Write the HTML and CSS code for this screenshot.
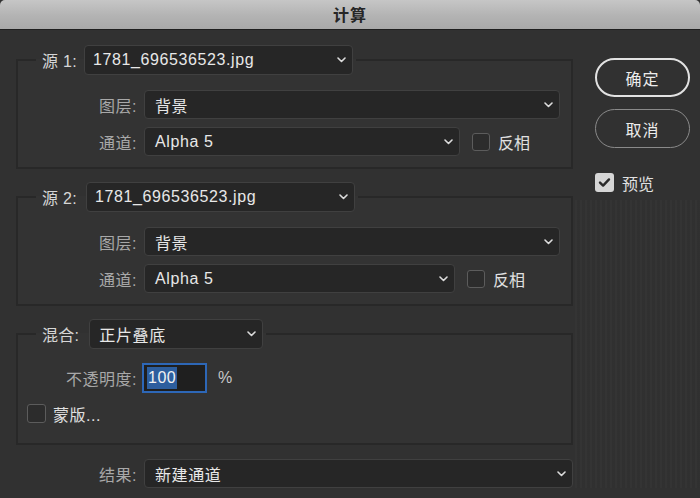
FILE: index.html
```html
<!DOCTYPE html>
<html lang="zh-CN">
<head>
<meta charset="utf-8">
<title>计算</title>
<link rel="stylesheet" href="styles.css">
</head>
<body>
<div class="titlebar">计算</div>
<div class="dialog">
  <div class="main">
    <fieldset class="group">
      <legend class="legend">
        <span class="legend-label">源 1:</span>
        <div class="select select-src">
          <span class="value">1781_696536523.jpg</span>
          <svg class="chev" width="9" height="6" viewBox="0 0 9 6"><path d="M1 1 L4.5 4.5 L8 1"/></svg>
        </div>
      </legend>
      <div class="row">
        <span class="label">图层:</span>
        <div class="select select-row grow">
          <span class="value">背景</span>
          <svg class="chev" width="9" height="6" viewBox="0 0 9 6"><path d="M1 1 L4.5 4.5 L8 1"/></svg>
        </div>
      </div>
      <div class="row gap-row">
        <span class="label">通道:</span>
        <div class="select select-row select-ch1">
          <span class="value">Alpha 5</span>
          <svg class="chev" width="9" height="6" viewBox="0 0 9 6"><path d="M1 1 L4.5 4.5 L8 1"/></svg>
        </div>
        <span class="checkbox"></span>
        <span class="check-text">反相</span>
      </div>
    </fieldset>

    <fieldset class="group">
      <legend class="legend">
        <span class="legend-label label-2">源 2:</span>
        <div class="select select-src">
          <span class="value">1781_696536523.jpg</span>
          <svg class="chev" width="9" height="6" viewBox="0 0 9 6"><path d="M1 1 L4.5 4.5 L8 1"/></svg>
        </div>
      </legend>
      <div class="row">
        <span class="label">图层:</span>
        <div class="select select-row grow">
          <span class="value">背景</span>
          <svg class="chev" width="9" height="6" viewBox="0 0 9 6"><path d="M1 1 L4.5 4.5 L8 1"/></svg>
        </div>
      </div>
      <div class="row gap-row">
        <span class="label">通道:</span>
        <div class="select select-row select-ch2">
          <span class="value">Alpha 5</span>
          <svg class="chev" width="9" height="6" viewBox="0 0 9 6"><path d="M1 1 L4.5 4.5 L8 1"/></svg>
        </div>
        <span class="checkbox"></span>
        <span class="check-text">反相</span>
      </div>
    </fieldset>

    <fieldset class="group group-blend">
      <legend class="legend">
        <span class="legend-label label-3">混合:</span>
        <div class="select select-blend">
          <span class="value">正片叠底</span>
          <svg class="chev" width="9" height="6" viewBox="0 0 9 6"><path d="M1 1 L4.5 4.5 L8 1"/></svg>
        </div>
      </legend>
      <div class="row opacity-row">
        <span class="label">不透明度:</span>
        <div class="text-input"><span class="selected">100</span></div>
        <span class="percent">%</span>
      </div>
      <div class="row mask-row">
        <span class="checkbox mask-box"></span>
        <span class="check-text mask-text">蒙版...</span>
      </div>
    </fieldset>

    <div class="row result-row">
      <span class="label">结果:</span>
      <div class="select select-row grow">
        <span class="value">新建通道</span>
        <svg class="chev" width="9" height="6" viewBox="0 0 9 6"><path d="M1 1 L4.5 4.5 L8 1"/></svg>
      </div>
    </div>
  </div>

  <div class="side">
    <div class="btn btn-ok">确定</div>
    <div class="btn btn-cancel">取消</div>
    <div class="preview">
      <span class="checkbox checked">
        <svg width="19" height="19" viewBox="0 0 19 19"><path d="M5 9.6 L8.1 12.6 L14 6.4"/></svg>
      </span>
      <span class="check-text preview-text">预览</span>
    </div>
    <div class="stripes"></div>
  </div>
</div>
</body>
</html>
```

FILE: styles.css
```css
* {
  box-sizing: border-box;
}

html, body {
  margin: 0;
  padding: 0;
  background: #313131;
  width: 700px;
  height: 498px;
  overflow: hidden;
}

body {
  font-family: "Liberation Sans", "Noto Sans CJK SC", sans-serif;
  font-size: 16px;
  color: #e2e2e2;
}

.titlebar {
  height: 30px;
  line-height: 29px;
  text-align: center;
  font-family: "Noto Sans CJK SC", sans-serif;
  font-weight: 700;
  font-size: 16px;
  color: #262626;
  background: linear-gradient(to bottom, #c6c6c6 0%, #b3b3b3 55%, #a9a9a9 100%);
  border-bottom: 1px solid #1f1f1f;
  border-radius: 5px 5px 0 0;
  letter-spacing: 1px;
}

.dialog {
  display: flex;
  align-items: stretch;
  padding: 15px 0 0 16px;
  gap: 22px;
  height: 468px;
}

.main {
  width: 557px;
  display: flex;
  flex-direction: column;
}

.group {
  margin: 0 0 13px 0;
  padding: 15px 11px 11px 18px;
  border: 2px solid #282828;
  min-inline-size: 0;
  background: #333333;
}

.group-blend {
  padding-top: 14px;
  padding-bottom: 20px;
  margin-bottom: 14px;
}

.legend {
  display: flex;
  align-items: center;
  padding: 0 3px 0 6px;
  height: 30px;
}

.legend-label {
  color: #d6d6d6;
  margin-right: 7px;
  letter-spacing: 0.3px;
  white-space: nowrap;
}

.label-2 {
  margin-right: 9px;
}

.label-3 {
  margin-right: 10px;
}

.select {
  display: flex;
  align-items: center;
  background: #262626;
  border: 1px solid #404040;
  border-radius: 4px;
  color: #e8e8e8;
  letter-spacing: 0.6px;
  padding: 0 6px 0 8px;
  white-space: nowrap;
}

.select .value {
  flex: 1;
}

.chev {
  flex: none;
  fill: none;
  stroke: #dcdcdc;
  stroke-width: 1.6;
  stroke-linecap: round;
  stroke-linejoin: round;
}

.select-src {
  width: 269px;
  height: 30px;
}

.select-blend {
  width: 174px;
  height: 30px;
  padding-left: 9px;
}

.select-row {
  height: 29px;
  padding-left: 10px;
}

.grow {
  flex: 1;
}

.select-ch1 {
  width: 316px;
}

.select-ch2 {
  width: 311px;
}

.row {
  display: flex;
  align-items: center;
  height: 29px;
}

.gap-row {
  margin-top: 8px;
}

.label {
  width: 101px;
  margin-right: 7px;
  text-align: right;
  color: #a8a8a8;
  letter-spacing: 0.5px;
  white-space: nowrap;
}

.checkbox {
  display: inline-flex;
  align-items: center;
  justify-content: center;
  width: 18px;
  height: 18px;
  margin-left: 12px;
  border: 1.5px solid #5c5c5c;
  border-radius: 3px;
  background: #2c2c2c;
  flex: none;
}

.check-text {
  margin-left: 8px;
  color: #e0e0e0;
  font-size: 16px;
}

.opacity-row {
  height: 30px;
}

.opacity-row .label {
  margin-right: 5px;
}

.text-input {
  width: 65px;
  height: 30px;
  border: 2px solid #2d67b7;
  background: #1f1f1f;
  display: flex;
  align-items: center;
  padding-left: 3px;
}

.selected {
  background: #2d5e9e;
  color: #f2f2f2;
  line-height: 22px;
  padding: 0 1px;
  letter-spacing: 0.5px;
}

.percent {
  margin-left: 11px;
  color: #c8c8c8;
}

.mask-row {
  margin-top: 11px;
  height: 19px;
  margin-left: -9px;
}

.mask-box {
  width: 19px;
  height: 19px;
  margin-left: 0;
}

.mask-text {
  margin-left: 7px;
  letter-spacing: 0.5px;
}

.result-row {
  padding-left: 20px;
}

.side {
  width: 95px;
  display: flex;
  flex-direction: column;
  padding-top: 13px;
}

.btn {
  height: 39px;
  border-radius: 20px;
  display: flex;
  align-items: center;
  justify-content: center;
  font-family: "Noto Sans CJK SC", sans-serif;
  font-size: 16px;
  color: #ececec;
  letter-spacing: 1px;
}

.btn-ok {
  border: 2px solid #e2e2e2;
}

.btn-cancel {
  margin-top: 12px;
  border: 1.5px solid #8a8a8a;
}

.preview {
  display: flex;
  align-items: center;
  margin-top: 25px;
  height: 19px;
}

.preview .checked {
  margin-left: 0;
  width: 19px;
  height: 19px;
  background: #d6d6d6;
  border: none;
}

.checked svg {
  fill: none;
  stroke: #2a2a2a;
  stroke-width: 2.4;
  stroke-linecap: round;
  stroke-linejoin: round;
}

.preview-text {
  margin-left: 8px;
}

.stripes {
  flex: 1;
  margin: 8px -10px 10px -20px;
  background: repeating-linear-gradient(90deg, rgba(255, 255, 255, 0.014) 0 2px, rgba(0, 0, 0, 0.014) 2px 5px);
}
```
